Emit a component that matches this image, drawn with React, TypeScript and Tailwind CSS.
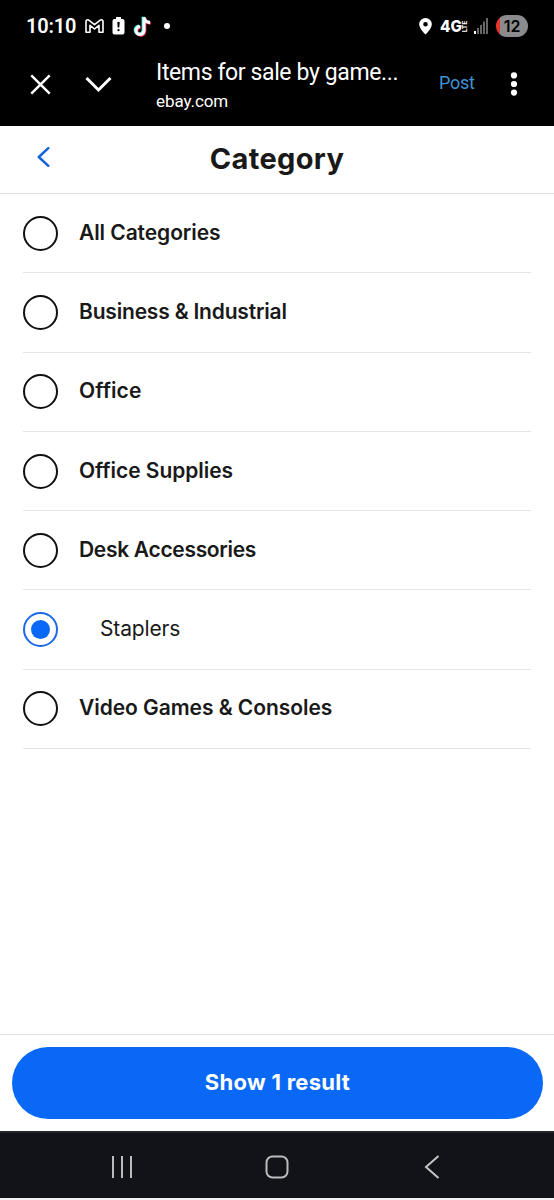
const categories = [
  { label: 'All Categories', spacing: 'tracking-[-0.08px]' },
  { label: 'Business & Industrial', spacing: 'tracking-[-0.19px]' },
  { label: 'Office', spacing: 'tracking-[0.1px]' },
  { label: 'Office Supplies', spacing: 'tracking-[-0.05px]' },
  { label: 'Desk Accessories', spacing: 'tracking-[-0.31px]' },
  { label: 'Staplers', spacing: 'tracking-[-0.15px]', selected: true },
  { label: 'Video Games & Consoles', spacing: 'tracking-[-0.05px]' },
];

function StatusBar() {
  return (
    <div className="flex h-[52px] items-center pl-[26px] pr-[26px] font-['Roboto',sans-serif] text-white">
      <span className="w-[50px] whitespace-nowrap text-[20px] font-semibold leading-none tracking-[-0.2px]">10:10</span>
      <svg className="ml-[9px] h-[14px] w-[19px]" viewBox="0 0 19 14" fill="none" stroke="white" strokeWidth="1.6" strokeLinejoin="round">
        <path d="M1 2.5Q1 .8 2.8.8 3.5.8 4.1 1.4L9.5 5.7 14.9 1.4Q15.5.8 16.2.8 18 .8 18 2.5V13.2H14V6.3L9.5 10 5 6.3V13.2H1Z" />
      </svg>
      <svg className="ml-[8px] h-[18px] w-[13px]" viewBox="0 0 13 18">
        <path d="M4 0H9V2H10.5Q12.5 2 12.5 4V15.5Q12.5 17.5 10.5 17.5H2.5Q.5 17.5.5 15.5V4Q.5 2 2.5 2H4Z" fill="white" />
        <path d="M5.3 5H7.7L7.3 10.5H5.7Z" fill="black" />
        <circle cx="6.5" cy="13.1" r="1.2" fill="black" />
      </svg>
      <svg className="ml-[8px] h-[21px] w-[20px]" viewBox="0 0 20 21" fill="none">
        <g strokeWidth="3">
          <path d="M10.1 .8V14.1A4 4 0 1 1 6 10M10.1 .8Q10.8 5.8 16.2 6.1" stroke="#25f4ee" />
          <path d="M11.9 2V15.3A4 4 0 1 1 7.8 11.2M11.9 2Q12.6 7 17.8 7.3" stroke="#fe2c55" />
          <path d="M11 1.3V14.6A4 4 0 1 1 6.9 10.5M11 1.3Q11.7 6.3 17 6.6" stroke="white" />
        </g>
      </svg>
      <span className="ml-[11px] size-[6px] rounded-full bg-white" />
      <svg className="ml-auto h-[17px] w-[13px]" viewBox="0 0 13 17">
        <path fillRule="evenodd" fill="white" d="M6.5 0A6.3 6.3 0 0 0 .2 6.3C.2 10.8 6.5 16.6 6.5 16.6S12.8 10.8 12.8 6.3A6.3 6.3 0 0 0 6.5 0ZM6.5 4A2.3 2.3 0 1 1 6.5 8.6 2.3 2.3 0 0 1 6.5 4Z" />
      </svg>
      <div className="ml-[8px] flex h-[14px] w-[29px] items-center">
        <span className="w-[22px] origin-left scale-x-[0.92] whitespace-nowrap font-['Inter',sans-serif] text-[16.5px] font-extrabold leading-none">4G</span>
        <span className="ml-px flex h-[14px] w-[6px] items-center justify-center">
          <span className="-rotate-90 text-[7px] font-bold leading-none">LTE</span>
        </span>
      </div>
      <svg className="ml-[5px] h-[16px] w-[14px]" viewBox="0 0 14 16">
        <path d="M0 13H2V16H0Z" fill="white" />
        <path d="M3 10H5V16H3ZM6 7H8V16H6ZM9 3.5H11V16H9ZM12 0H14V16H12Z" fill="#666" />
      </svg>
      <div className="ml-[8px] flex h-[22px] w-[32px] items-center justify-center overflow-hidden rounded-full bg-linear-to-r from-[#e8352c] from-[14%] to-[#8b8b8d] to-[14%] font-['Inter',sans-serif] text-[16px] font-semibold leading-none text-black">
        12
      </div>
    </div>
  );
}

function BrowserBar() {
  return (
    <div className="flex h-[74px] items-start pl-[30px] pr-[36px] font-['Roboto',sans-serif] text-white">
      <svg className="mt-[22px] h-[21px] w-[21px]" viewBox="0 0 21 21" fill="none" stroke="white" strokeWidth="2.5">
        <path d="M1.3 1.3 19.7 19.7M19.7 1.3 1.3 19.7" />
      </svg>
      <svg className="ml-[34px] mt-[24px] h-[17px] w-[27px]" viewBox="0 0 27 17" fill="none" stroke="white" strokeWidth="3">
        <path d="M1.5 2 13.5 14 25.5 2" />
      </svg>
      <div className="ml-[44px] w-[283px] whitespace-nowrap">
        <div className="mt-[6px] text-[23px] leading-[30px] tracking-[-0.38px]">Items for sale by game...</div>
        <div className="mt-[3px] text-[17px] leading-[20px] tracking-[-0.08px]">ebay.com</div>
      </div>
      <span className="mt-[20px] text-[18px] leading-[22px] tracking-[-0.3px] text-[#3e92d5]">Post</span>
      <svg className="ml-auto mt-[20px] h-[24px] w-[8px]" viewBox="0 0 8 24" fill="white">
        <circle cx="4" cy="3.4" r="3.1" />
        <circle cx="4" cy="12" r="3.1" />
        <circle cx="4" cy="20.6" r="3.1" />
      </svg>
    </div>
  );
}

function Radio({ selected }: { selected?: boolean }) {
  return selected ? (
    <span className="flex size-[35px] items-center justify-center rounded-full border-2 border-[#1c68ea]">
      <span className="size-[19px] rounded-full bg-[#0968f6]" />
    </span>
  ) : (
    <span className="size-[35px] rounded-full border-2 border-[#111]" />
  );
}

export default function App() {
  return (
    <div className="flex h-[1200px] w-[554px] flex-col overflow-hidden bg-white font-['Inter',sans-serif] text-[#191919]">
      <header className="h-[126px] bg-black">
        <StatusBar />
        <BrowserBar />
      </header>
      <div className="grid h-[68px] grid-cols-[1fr_auto_1fr] items-center border-b border-[#e2e2e2] pb-[2px]">
        <svg className="mb-[3px] ml-[37px] h-[20px] w-[13px]" viewBox="0 0 13 20" fill="none" stroke="#1463de" strokeWidth="2.5" strokeLinecap="round" strokeLinejoin="round">
          <path d="M11.3 1.2 1.8 10 11.3 18.8" />
        </svg>
        <h1 className="text-[29px] font-bold leading-[34px] tracking-[0.35px]">Category</h1>
      </div>
      <ul className="mx-[23px] flex flex-col">
        {categories.map((item) => (
          <li key={item.label} className="flex h-[79.3px] items-center border-b border-[#e5e5e5]">
            <Radio selected={item.selected} />
            <span className={`${item.selected ? 'ml-[42px] font-normal' : 'ml-[21px] font-semibold'} ${item.spacing} mb-px whitespace-nowrap text-[21px] leading-[26px]`}>
              {item.label}
            </span>
          </li>
        ))}
      </ul>
      <footer className="mt-auto">
        <div className="h-[97px] border-t border-[#e2e2e2] px-[12px] pt-[12px]">
          <button className="block h-[72px] w-[531px] rounded-full bg-[#0968f6] pb-px text-[22px] font-bold tracking-[0.28px] text-white">Show 1 result</button>
        </div>
        <nav className="flex h-[67px] items-center border-t-2 border-[#25262b] bg-[#121318] pl-[111px] pt-[3px]">
          <svg className="h-[22px] w-[22px]" viewBox="0 0 22 22" fill="none" stroke="#bcbcc0" strokeWidth="2">
            <path d="M2 0V22M11 0V22M20 0V22" />
          </svg>
          <svg className="ml-[132px] h-[24px] w-[24px]" viewBox="0 0 24 24" fill="none" stroke="#bcbcc0" strokeWidth="2">
            <rect x="1.5" y="1.5" width="21" height="21" rx="6" />
          </svg>
          <svg className="ml-[135px] h-[24px] w-[16px]" viewBox="0 0 16 24" fill="none" stroke="#c4c4c8" strokeWidth="2">
            <path d="M14.5 1 2 12 14.5 23" />
          </svg>
        </nav>
        <div className="h-[2px] bg-[#f2f2f2]" />
      </footer>
    </div>
  );
}
